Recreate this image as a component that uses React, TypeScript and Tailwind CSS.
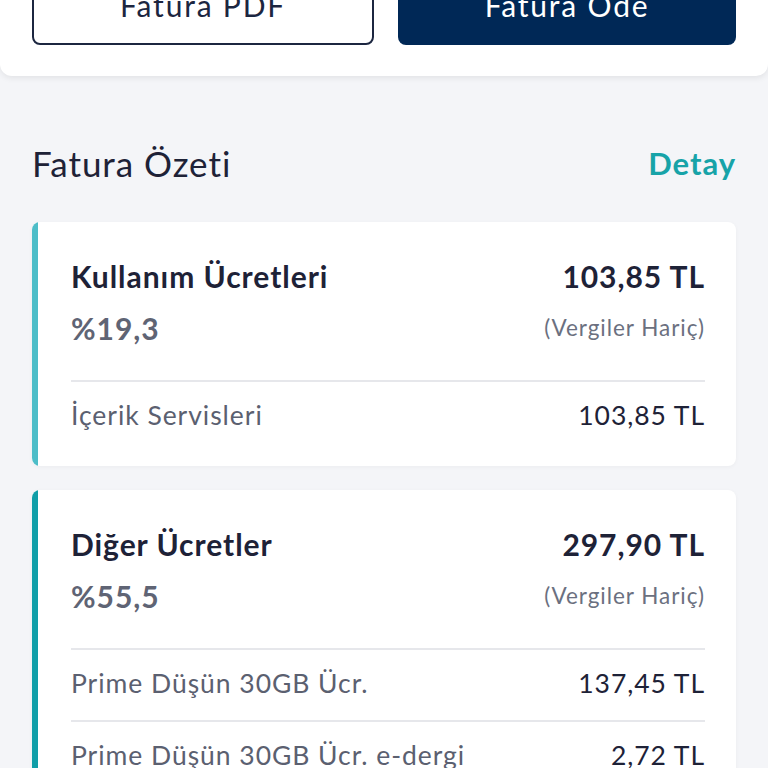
import type { ReactNode } from "react";

type Row = { label: string; amount: string };

type Group = {
  title: string;
  percent: string;
  total: string;
  accent: string;
  rows: Row[];
};

const groups: Group[] = [
  {
    title: "Kullanım Ücretleri",
    percent: "%19,3",
    total: "103,85 TL",
    accent: "bg-[#4dbdc8]",
    rows: [{ label: "İçerik Servisleri", amount: "103,85 TL" }],
  },
  {
    title: "Diğer Ücretler",
    percent: "%55,5",
    total: "297,90 TL",
    accent: "bg-[#109ea8]",
    rows: [
      { label: "Prime Düşün 30GB Ücr.", amount: "137,45 TL" },
      { label: "Prime Düşün 30GB Ücr. e-dergi", amount: "2,72 TL" },
    ],
  },
];

function SummaryCard({ group }: { group: Group }) {
  return (
    <div className="flex rounded-[8px] bg-white shadow-[0_1px_4px_rgba(0,0,0,0.04)] overflow-hidden shrink-0">
      <div className={`w-[6px] shrink-0 ${group.accent}`} />
      <div className="flex-1 pl-[33px] pr-[31px] pb-[14px]">
        <div className="flex justify-between pt-[34px] pb-[32px]">
          <div className="flex flex-col gap-[12px]">
            <span className="text-[30px] leading-[40px] font-bold text-[#1e2237]">{group.title}</span>
            <span className="text-[30px] leading-[40px] font-bold text-[#5f6474]">{group.percent}</span>
          </div>
          <div className="flex flex-col items-end gap-[12px]">
            <span className="text-[30px] leading-[40px] font-bold text-[#1e2237]">{group.total}</span>
            <span className="text-[22.5px] leading-[40px] text-[#6b7080]">(Vergiler Hariç)</span>
          </div>
        </div>
        {group.rows.map((r) => (
          <RowLine key={r.label}>
            <span className="text-[#5b6070]">{r.label}</span>
            <span className="text-[#1e2237]">{r.amount}</span>
          </RowLine>
        ))}
      </div>
    </div>
  );
}

function RowLine({ children }: { children: ReactNode }) {
  return (
    <div className="flex justify-between items-center h-[72px] border-t-2 border-[#e6e7eb] text-[26.5px] pb-[2px]">
      {children}
    </div>
  );
}

export default function App() {
  return (
    <div
      className="w-[768px] h-[768px] overflow-hidden bg-[#f4f5f8] flex flex-col tracking-[0.06em]"
      style={{ fontFamily: "Lato, 'Noto Sans', sans-serif" }}
    >
      {/* action bar */}
      <div className="bg-white rounded-b-[12px] shadow-[0_2px_6px_rgba(0,0,0,0.08)] shrink-0 h-[76px] flex items-end pb-[31px] px-[32px] gap-[24px]">
        <button className="flex-1 h-[72px] rounded-[8px] border-2 border-[#1c2640] text-[#1c2640] text-[30px] leading-none flex items-end justify-center pb-[23px] tracking-[0.06em]">
          Fatura PDF
        </button>
        <button className="flex-1 h-[72px] rounded-[8px] bg-[#002856] text-white text-[30px] leading-none flex items-end justify-center pb-[25px] tracking-[0.06em]">
          Fatura Öde
        </button>
      </div>

      <div className="px-[32px] pt-[64px] flex flex-col">
        <div className="flex justify-between items-center h-[46px] mb-[36px]">
          <span className="text-[35px] text-[#1e2237]">Fatura Özeti</span>
          <span className="text-[31px] font-bold text-[#17a3a8]">Detay</span>
        </div>
        <div className="flex flex-col gap-[24px]">
          {groups.map((g) => (
            <SummaryCard key={g.title} group={g} />
          ))}
        </div>
      </div>
    </div>
  );
}
